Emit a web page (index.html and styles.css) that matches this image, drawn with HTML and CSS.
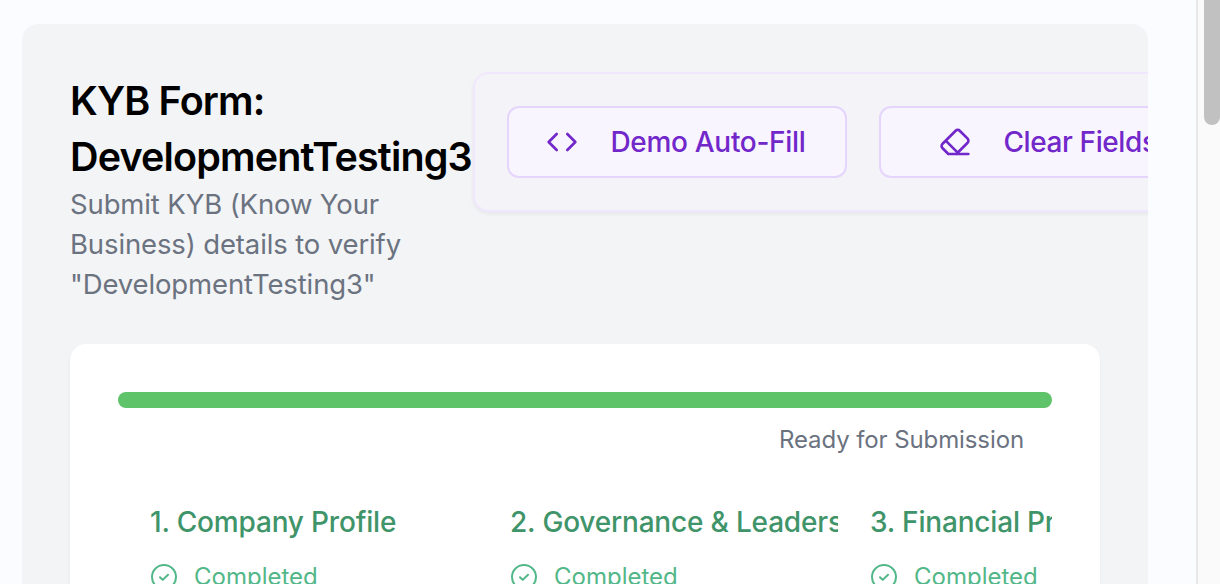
FILE: index.html
```html
<!DOCTYPE html>
<html lang="en">
<head>
<meta charset="utf-8">
<title>KYB Form</title>
<link rel="stylesheet" href="styles.css">
</head>
<body>
<div class="app">
  <main class="content">
    <section class="panel">
      <header class="header">
        <div class="intro">
          <h1 class="title">KYB Form: DevelopmentTesting3</h1>
          <p class="subtitle">Submit KYB (Know Your Business) details to verify "DevelopmentTesting3"</p>
        </div>
        <div class="toolbar">
          <button class="btn">
            <svg class="btn-icon" viewBox="0 0 24 24"><path d="m16 18 6-6-6-6M8 6l-6 6 6 6"/></svg>
            <span class="btn-label">Demo Auto-Fill</span>
          </button>
          <button class="btn">
            <svg class="btn-icon" viewBox="0 0 24 24"><path d="m7 21-4.3-4.3c-1-1-1-2.5 0-3.4l9.6-9.6c1-1 2.5-1 3.4 0l5.6 5.6c1 1 1 2.5 0 3.4L13 21M22 21H7M5 11l9 9"/></svg>
            <span class="btn-label clear-label">Clear Fields</span>
          </button>
        </div>
      </header>
      <div class="card">
        <div class="progress"></div>
        <p class="ready">Ready for Submission</p>
        <div class="steps">
          <div class="step">
            <h2 class="step-title">1. Company Profile</h2>
            <div class="status"><svg class="check" viewBox="0 0 28 28"><circle cx="14" cy="14" r="12"/><path d="m10 14.2 2.7 2.7 5.3-5.2"/></svg><span>Completed</span></div>
          </div>
          <div class="step">
            <h2 class="step-title">2. Governance &amp; Leadership</h2>
            <div class="status"><svg class="check" viewBox="0 0 28 28"><circle cx="14" cy="14" r="12"/><path d="m10 14.2 2.7 2.7 5.3-5.2"/></svg><span>Completed</span></div>
          </div>
          <div class="step">
            <h2 class="step-title">3. Financial Profile</h2>
            <div class="status"><svg class="check" viewBox="0 0 28 28"><circle cx="14" cy="14" r="12"/><path d="m10 14.2 2.7 2.7 5.3-5.2"/></svg><span>Completed</span></div>
          </div>
        </div>
      </div>
    </section>
  </main>
  <div class="scrollbar"><div class="thumb"></div></div>
</div>
</body>
</html>
```
FILE: styles.css
```css
* { box-sizing: border-box; }
body { margin: 0; overflow: hidden; font-family: Inter, "Liberation Sans", sans-serif; background: #fbfcff; }
h1, h2, p { margin: 0; }
.app { display: flex; height: 584px; overflow: hidden; }
.content { flex: 1; min-width: 0; padding: 24px 48px 0 22px; }
.panel { height: 700px; padding: 48px; background: #f3f4f6; border-radius: 16px; overflow: hidden; }
.header { display: flex; align-items: flex-start; height: 272px; }
.intro { flex: 0 0 403px; padding-top: 1px; }
.title { font-size: 39.5px; line-height: 56px; font-weight: 600; letter-spacing: -.85px; color: #000; }
.subtitle { width: 380px; margin-top: -1px; font-size: 27.5px; line-height: 40px; letter-spacing: -.13px; color: #6b7280; }
.toolbar { flex: none; display: flex; gap: 32px; padding: 32px; border: 2px solid #f0e7fe; border-radius: 16px; background: #f4f3f8; box-shadow: 0 2px 4px rgba(0,0,0,.06); }
.btn { display: flex; align-items: center; justify-content: center; gap: 32px; width: 340px; height: 72px; padding: 0 2px 0 0; border: 2px solid #e5d5fc; border-radius: 12px; background: #f8f5ff; color: #7127c9; font: 500 28px/40px Inter, sans-serif; white-space: nowrap; }
.btn-label { letter-spacing: -.3px; }
.clear-label { letter-spacing: -.4px; }
.btn-icon { width: 32px; height: 32px; fill: none; stroke: currentColor; stroke-width: 2; stroke-linecap: round; stroke-linejoin: round; }
.card { height: 400px; padding: 48px; background: #fff; border-radius: 16px; box-shadow: 0 2px 4px rgba(0,0,0,.04); }
.progress { height: 16px; border-radius: 8px; background: #5fc369; }
.ready { padding: 16px 28px 0 0; font-size: 24px; line-height: 32px; letter-spacing: -.1px; color: #6b7280; text-align: right; }
.steps { display: flex; gap: 32px; padding: 46px 0 0 32px; overflow: hidden; }
.step { flex: 0 0 328px; overflow: hidden; }
.step-title { font-size: 28px; line-height: 40px; font-weight: 500; letter-spacing: -.18px; color: #409469; white-space: nowrap; }
.status { display: flex; align-items: center; gap: 16px; padding-top: 18px; font-size: 24px; line-height: 32px; color: #52b788; }
.status span { padding-top: 1px; }
.check { width: 28px; height: 28px; fill: none; stroke: currentColor; stroke-width: 2; stroke-linecap: round; stroke-linejoin: round; }
.scrollbar { flex: none; width: 24px; padding-left: 6px; border-left: 2px solid #e8e8e8; background: #fafafa; }
.thumb { height: 125px; border-radius: 0 0 8px 8px; background: #c1c1c1; }
```
